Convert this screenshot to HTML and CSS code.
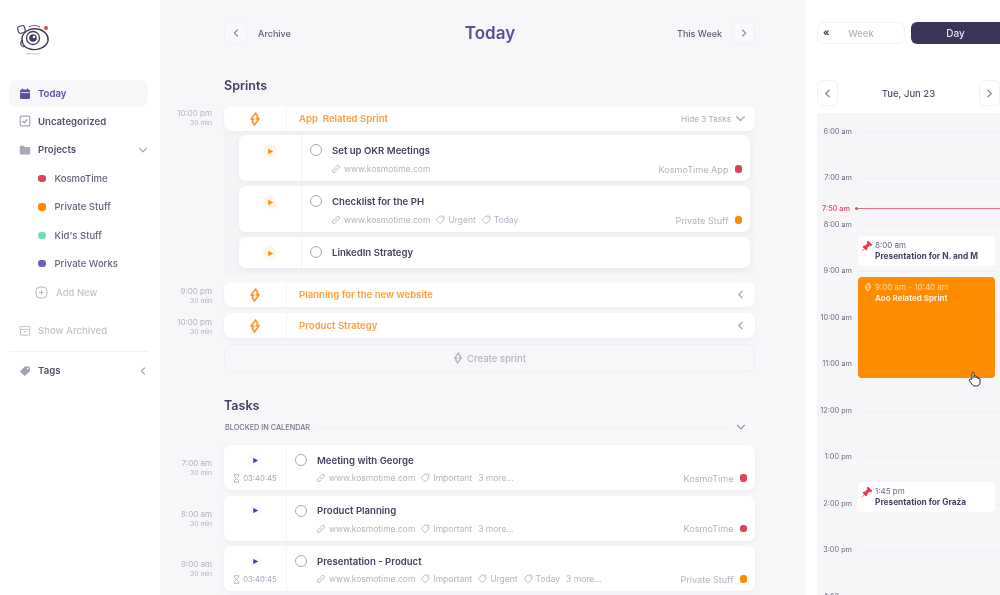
FILE: index.html
```html
<!DOCTYPE html>
<html lang="en">
<head>
    <meta charset="UTF-8">
    <meta name="viewport" content="width=device-width, initial-scale=1.0">
    <title>KosmoTime - Today</title>
    <link rel="stylesheet" href="styles.css">
</head>
<body>
    <svg class="icon-defs" aria-hidden="true">
        <symbol id="bolt" viewBox="0 0 12 14"><path d="M6.6 1 L2 7.2 L4.6 7.2 L3.2 9.2 L5.4 13 L10 6.8 L7.4 6.8 L8.8 4.8 Z" fill="none" stroke="currentColor" stroke-width="1.7" stroke-linejoin="round"/></symbol>
        <symbol id="link" viewBox="0 0 10 10"><path d="M4.2 5.8 L5.8 4.2 M3.4 4.4 L1.9 5.9 a1.5 1.5 0 0 0 2.2 2.2 L5.6 6.6 M4.4 3.4 L5.9 1.9 a1.5 1.5 0 0 1 2.2 2.2 L6.6 5.6" fill="none" stroke="currentColor" stroke-width="0.9" stroke-linecap="round"/></symbol>
        <symbol id="tag" viewBox="0 0 10 10"><path d="M1.2 4.6 L5 1 L8.8 1.2 L8.8 5 L5.2 8.8 Z" fill="none" stroke="currentColor" stroke-width="0.9" stroke-linejoin="round"/><circle cx="6.9" cy="3" r="0.6" fill="currentColor"/></symbol>
        <symbol id="play" viewBox="0 0 8 8"><path d="M1.4 .8 L7 4 L1.4 7.2 Z" fill="currentColor"/></symbol>
        <symbol id="left" viewBox="0 0 10 10"><path d="M6.4 2 L3.4 5 L6.4 8" fill="none" stroke="currentColor" stroke-width="1.2" stroke-linecap="round" stroke-linejoin="round"/></symbol>
        <symbol id="right" viewBox="0 0 10 10"><path d="M3.6 2 L6.6 5 L3.6 8" fill="none" stroke="currentColor" stroke-width="1.2" stroke-linecap="round" stroke-linejoin="round"/></symbol>
        <symbol id="down" viewBox="0 0 10 10"><path d="M1.6 3.4 L5 6.8 L8.4 3.4" fill="none" stroke="currentColor" stroke-width="1.2" stroke-linecap="round" stroke-linejoin="round"/></symbol>
        <symbol id="hourglass" viewBox="0 0 8 10"><path d="M1 .7 H7 M1 9.3 H7 M1.6 .7 V2.6 L6.4 7.4 V9.3 M6.4 .7 V2.6 L1.6 7.4 V9.3" fill="none" stroke="currentColor" stroke-width="0.9"/></symbol>
        <symbol id="pin" viewBox="0 0 10 10"><path d="M5.8 .8 L9.2 4.2 L8.2 4.8 L6.9 4.6 L5 6.4 L5 7.8 L4.2 8.4 L1.6 5.8 L2.2 5 L3.6 5 L5.4 3.1 L5.2 1.8 Z M2.8 7.2 L.8 9.2" fill="#e8344e" stroke="#e8344e" stroke-width="0.6" stroke-linejoin="round"/></symbol>
    </svg>

    <aside class="sidebar">
        <svg class="logo" width="36" height="40" viewBox="0 0 36 40">
            <rect x="2" y="8" width="7" height="7" rx="2" transform="rotate(-15 5.5 11.5)" fill="#fff" stroke="#4a4560" stroke-width="1.2"/>
            <path d="M6 21 C6 14 14 10 21 11 C29 12 33 18 32 23 C30 30 20 33 14 31 C9 30 6 26 6 21 Z" fill="#fff" stroke="#3f3a58" stroke-width="1.4"/>
            <circle cx="17" cy="20" r="6.5" fill="#fff" stroke="#3f3a58" stroke-width="1.3"/>
            <circle cx="17" cy="20" r="3.8" fill="#3f3a58"/>
            <circle cx="18" cy="19" r="1.3" fill="#fff"/>
            <path d="M13 9 C15 7 21 7 24 9" fill="none" stroke="#6a6680" stroke-width="1.2"/>
            <path d="M6 22 C4 25 4 28 8 29" fill="none" stroke="#3f3a58" stroke-width="1.2"/>
            <circle cx="30" cy="10" r="2" fill="#ee3f55"/>
            <rect x="10" y="35" width="14" height="1.5" rx="1" fill="#d5d5dc"/>
        </svg>

        <nav class="nav">
            <a class="nav-item active">
                <svg width="12" height="12" viewBox="0 0 12 12"><path d="M1 3 a1.5 1.5 0 0 1 1.5 -1.5 H9.5 A1.5 1.5 0 0 1 11 3 V9.5 A1.5 1.5 0 0 1 9.5 11 H2.5 A1.5 1.5 0 0 1 1 9.5 Z" fill="#5c4fa2"/><path d="M1.5 4.6 H10.5" stroke="#fff" stroke-width="0.8"/><path d="M3.5 .6 V2.4 M8.5 .6 V2.4" stroke="#5c4fa2" stroke-width="1.1"/></svg>
                Today
            </a>
            <a class="nav-item">
                <svg width="12" height="12" viewBox="0 0 12 12"><rect x="1.2" y="1.2" width="9.6" height="9.6" rx="1.4" fill="#fff" stroke="#a6a5b3" stroke-width="1.2"/><path d="M3.6 6 L5.3 7.7 L8.4 4.3" fill="none" stroke="#8d8c9c" stroke-width="1.1"/></svg>
                Uncategorized
            </a>
            <a class="nav-item">
                <svg width="12" height="12" viewBox="0 0 12 12"><path d="M.8 2.8 A1 1 0 0 1 1.8 1.8 H4.6 L5.8 3 H10.2 A1 1 0 0 1 11.2 4 V9.4 A1 1 0 0 1 10.2 10.4 H1.8 A1 1 0 0 1 .8 9.4 Z" fill="#a9a8b6"/></svg>
                Projects
                <svg class="nav-caret" width="10" height="10"><use href="#down"/></svg>
            </a>
            <a class="nav-item project"><span class="dot red"></span>KosmoTime</a>
            <a class="nav-item project"><span class="dot orange"></span>Private Stuff</a>
            <a class="nav-item project"><span class="dot mint"></span>Kid's Stuff</a>
            <a class="nav-item project"><span class="dot violet"></span>Private Works</a>
            <a class="nav-item project muted">
                <svg class="add-icon" width="13" height="13" viewBox="0 0 13 13"><rect x="1" y="1" width="11" height="11" rx="4" fill="none" stroke="#b9b8c4" stroke-width="1"/><path d="M6.5 4 V9 M4 6.5 H9" stroke="#b9b8c4" stroke-width="1"/></svg>
                Add New
            </a>
            <a class="nav-item muted archived">
                <svg width="12" height="12" viewBox="0 0 12 12"><rect x=".8" y="1.6" width="10.4" height="2.8" rx=".6" fill="none" stroke="#c2c1cc" stroke-width="1"/><path d="M1.6 4.4 V10.2 H10.4 V4.4 M4.6 6.6 H7.4" fill="none" stroke="#c2c1cc" stroke-width="1"/></svg>
                Show Archived
            </a>
            <a class="nav-item tags">
                <svg width="12" height="12" viewBox="0 0 12 12"><path d="M.8 6.4 L6 1.4 L10.6 1.6 L11 6 L5.8 11 Z" fill="#a09fae"/><circle cx="8.6" cy="3.6" r=".8" fill="#fff"/></svg>
                Tags
                <svg class="nav-caret" width="10" height="10"><use href="#left"/></svg>
            </a>
        </nav>
    </aside>

    <main class="main">
        <header class="top">
            <button class="square"><svg width="10" height="10"><use href="#left"/></svg></button>
            <span class="top-link archive">Archive</span>
            <h1>Today</h1>
            <span class="top-link week">This Week</span>
            <button class="square"><svg width="10" height="10"><use href="#right"/></svg></button>
        </header>

        <h2 class="sprints-title">Sprints</h2>

        <div class="line open">
            <div class="time">10:00 pm<small>30 min</small></div>
            <div class="sprint">
                <div class="sprint-icon"><svg width="12" height="14"><use href="#bolt"/></svg></div>
                <div class="sprint-name">App&nbsp; Related Sprint</div>
                <div class="sprint-toggle">Hide 3 Tasks <svg width="11" height="11"><use href="#down"/></svg></div>
            </div>
        </div>

        <div class="subtasks">
            <div class="subtask tall">
                <div class="subtask-play"><span class="play-glow"><svg width="7" height="7"><use href="#play"/></svg></span></div>
                <div class="body">
                    <div class="title"><span class="radio"></span>Set up OKR Meetings</div>
                    <div class="meta">
                        <svg width="10" height="10"><use href="#link"/></svg>www.kosmotime.com
                        <span class="project-name">KosmoTime App<span class="dot red"></span></span>
                    </div>
                </div>
            </div>
            <div class="subtask tall">
                <div class="subtask-play"><span class="play-glow"><svg width="7" height="7"><use href="#play"/></svg></span></div>
                <div class="body">
                    <div class="title"><span class="radio"></span>Checklist for the PH</div>
                    <div class="meta">
                        <svg width="10" height="10"><use href="#link"/></svg>www.kosmotime.com
                        <svg class="gap" width="10" height="10"><use href="#tag"/></svg>Urgent
                        <svg class="gap" width="10" height="10"><use href="#tag"/></svg>Today
                        <span class="project-name">Private Stuff<span class="dot orange"></span></span>
                    </div>
                </div>
            </div>
            <div class="subtask short">
                <div class="subtask-play"><span class="play-glow"><svg width="7" height="7"><use href="#play"/></svg></span></div>
                <div class="body">
                    <div class="title"><span class="radio"></span>LinkedIn Strategy</div>
                </div>
            </div>
        </div>

        <div class="line after-sub low">
            <div class="time">9:00 pm<small>30 min</small></div>
            <div class="sprint">
                <div class="sprint-icon"><svg width="12" height="14"><use href="#bolt"/></svg></div>
                <div class="sprint-name">Planning for the new website</div>
                <div class="sprint-toggle"><svg width="11" height="11"><use href="#left"/></svg></div>
            </div>
        </div>
        <div class="line low">
            <div class="time">10:00 pm<small>30 min</small></div>
            <div class="sprint">
                <div class="sprint-icon"><svg width="12" height="14"><use href="#bolt"/></svg></div>
                <div class="sprint-name">Product Strategy</div>
                <div class="sprint-toggle"><svg width="11" height="11"><use href="#left"/></svg></div>
            </div>
        </div>
        <div class="line">
            <div class="time"></div>
            <button class="create"><svg width="10" height="12"><use href="#bolt"/></svg>Create sprint</button>
        </div>

        <h2 class="tasks-title">Tasks</h2>
        <div class="blocked">
            <span>BLOCKED IN CALENDAR</span>
            <i></i>
            <svg width="10" height="10"><use href="#down"/></svg>
        </div>

        <div class="line task-line">
            <div class="time">7:00 am<small>30 min</small></div>
            <div class="task">
                <div class="task-side">
                    <span class="play-glow blue"><svg width="7" height="7"><use href="#play"/></svg></span>
                    <span class="timer"><svg width="7" height="9"><use href="#hourglass"/></svg>03:40:45</span>
                </div>
                <div class="body">
                    <div class="title"><span class="radio"></span>Meeting with George</div>
                    <div class="meta">
                        <svg width="10" height="10"><use href="#link"/></svg>www.kosmotime.com
                        <svg class="gap" width="10" height="10"><use href="#tag"/></svg>Important
                        <span class="more">3 more...</span>
                        <span class="project-name">KosmoTime<span class="dot red"></span></span>
                    </div>
                </div>
            </div>
        </div>
        <div class="line task-line">
            <div class="time">8:00 am<small>30 min</small></div>
            <div class="task">
                <div class="task-side">
                    <span class="play-glow blue"><svg width="7" height="7"><use href="#play"/></svg></span>
                    <span class="timer"></span>
                </div>
                <div class="body">
                    <div class="title"><span class="radio"></span>Product Planning</div>
                    <div class="meta">
                        <svg width="10" height="10"><use href="#link"/></svg>www.kosmotime.com
                        <svg class="gap" width="10" height="10"><use href="#tag"/></svg>Important
                        <span class="more">3 more...</span>
                        <span class="project-name">KosmoTime<span class="dot red"></span></span>
                    </div>
                </div>
            </div>
        </div>
        <div class="line task-line">
            <div class="time">9:00 am<small>30 min</small></div>
            <div class="task">
                <div class="task-side">
                    <span class="play-glow blue"><svg width="7" height="7"><use href="#play"/></svg></span>
                    <span class="timer"><svg width="7" height="9"><use href="#hourglass"/></svg>03:40:45</span>
                </div>
                <div class="body">
                    <div class="title"><span class="radio"></span>Presentation - Product</div>
                    <div class="meta">
                        <svg width="10" height="10"><use href="#link"/></svg>www.kosmotime.com
                        <svg class="gap" width="10" height="10"><use href="#tag"/></svg>Important
                        <svg class="gap" width="10" height="10"><use href="#tag"/></svg>Urgent
                        <svg class="gap" width="10" height="10"><use href="#tag"/></svg>Today
                        <span class="more">3 more...</span>
                        <span class="project-name">Private Stuff<span class="dot orange"></span></span>
                    </div>
                </div>
            </div>
        </div>
    </main>

    <aside class="day">
        <div class="switch">
            <div class="switch-week"><b>«</b><span>Week</span></div>
            <div class="switch-day">Day</div>
        </div>
        <div class="date-nav">
            <button class="square big"><svg width="11" height="11"><use href="#left"/></svg></button>
            <span>Tue, Jun 23</span>
            <button class="square big"><svg width="11" height="11"><use href="#right"/></svg></button>
        </div>
        <div class="calendar">
            <div class="hour"><span>6:00 am</span><i></i></div>
            <div class="hour"><span>7:00 am</span><i></i></div>
            <div class="hour"><span>8:00 am</span><i></i></div>
            <div class="hour"><span>9:00 am</span><i></i></div>
            <div class="hour"><span>10:00 am</span><i></i></div>
            <div class="hour"><span>11:00 am</span><i></i></div>
            <div class="hour"><span>12:00 pm</span><i></i></div>
            <div class="hour"><span>1:00 pm</span><i></i></div>
            <div class="hour"><span>2:00 pm</span><i></i></div>
            <div class="hour"><span>3:00 pm</span><i></i></div>
            <div class="hour"><span>4:00 pm</span><i></i></div>

            <div class="now"><span>7:50 am</span><i></i></div>

            <div class="event ev-one">
                <svg width="12" height="12"><use href="#pin"/></svg>
                <div><p>8:00 am</p><strong>Presentation for N. and M</strong></div>
            </div>
            <div class="event sprint-event">
                <svg width="8" height="10"><use href="#bolt"/></svg>
                <div><p>9:00 am - 10:40 am</p><strong>Aoo Related Sprint</strong></div>
            </div>
            <div class="event ev-three">
                <svg width="12" height="12"><use href="#pin"/></svg>
                <div><p>1:45 pm</p><strong>Presentation for Graża</strong></div>
            </div>
            <svg class="cursor" width="14" height="16" viewBox="0 0 14 16"><path d="M4 8 V2.2 a1 1 0 0 1 2 0 V6.5 V5.6 a1 1 0 0 1 2 0 V6.8 a1 1 0 0 1 2 0 V8 a1 1 0 0 1 2 0 V11 C12 13.6 10.6 15 8.4 15 H7 C5.4 15 4.6 14.2 3.8 13 L1.4 9.6 C.8 8.6 2 7.6 3 8.4 Z" fill="#fff" stroke="#2e2a3d" stroke-width="1"/></svg>
        </div>
    </aside>
</body>
</html>
```

FILE: styles.css
```css
* { box-sizing: border-box; }
html, body { height: 100%; }
html { background: #fff; }
body {
    margin: 0;
    display: flex;
    height: 595px;
    overflow: hidden;
    background: #fff;
    color: #45415f;
    font-family: Inter, "Noto Sans", "Liberation Sans", sans-serif;
    filter: blur(0.5px);
}
button { font-family: inherit; padding: 0; cursor: pointer; }
svg { display: block; flex: none; }
.icon-defs { position: absolute; width: 0; height: 0; }

/* sidebar */
.sidebar { width: 160px; flex: none; padding: 18px 12px 0 9px; background: #fff; }
.logo { margin: 0 0 22px 7px; }
.nav { display: flex; flex-direction: column; }
.nav-item {
    display: flex;
    align-items: center;
    gap: 7px;
    height: 28.4px;
    padding: 0 0 0 10px;
    font-size: 9.6px;
    font-weight: 600;
    color: #55516b;
    border-radius: 8px;
}
.nav-item.active { background: #f7f7fa; color: #5c4fa2; height: 27px; }
.nav-caret { margin-left: auto; margin-right: 0; color: #a3a2b0; }
.nav-item.project { padding-left: 29px; gap: 9px; font-size: 9.5px; font-weight: 500; color: #66637a; }
.nav-item.project:nth-child(4) { margin-top: 0.5px; }
.nav-item.muted { color: #c3c2cd; font-weight: 500; }
.add-icon { margin-left: -3px; margin-right: -1px; }
.archived { margin-top: 10.5px; }
.tags { margin-top: 5.5px; border-top: 1px solid #f1f1f4; border-radius: 0; height: 39px; padding-top: 0; }
.dot { display: inline-block; width: 7.5px; height: 7.5px; border-radius: 3px; flex: none; }
.red { background: #dd4258; }
.orange { background: #ff8c00; }
.mint { background: #6fdcbc; }
.violet { background: #6f5fbb; }

/* main column */
.main { width: 645px; flex: none; padding: 22px 50px 0 0; background: #f7f7fa; }
.top { display: flex; align-items: center; height: 22px; margin-left: 64px; }
.top h1 { flex: none; margin: 0; text-align: center; font-size: 17px; font-weight: 600; color: #5a4f9c; }
.top-link { flex: 1; font-size: 9px; font-weight: 500; color: #5f5c74; white-space: nowrap; }
.archive { margin-left: 11px; }
.week { margin-right: 10px; text-align: right; }
.square {
    display: flex;
    align-items: center;
    justify-content: center;
    width: 23px;
    height: 22px;
    border: 1px solid #f1f1f5;
    border-radius: 6px;
    background: #f9f9fb;
    color: #8d8b9e;
}
.sprints-title, .tasks-title { margin: 0 0 0 64px; font-size: 12.5px; line-height: 16px; font-weight: 600; color: #45415f; }
.sprints-title { margin-top: 34px; margin-bottom: 12px; }
.tasks-title { margin-top: 26px; }

.line { display: flex; margin-bottom: 6px; }
.line.open { margin-bottom: 0; }
.line.after-sub { margin-top: 7px; }
.time { width: 64px; flex: none; padding: 3px 12px 0 0; text-align: right; font-size: 8px; line-height: 9px; color: #b3b2bf; }
.time small { display: block; font-size: 6.8px; }
.low .time { padding-top: 5px; }

.sprint {
    flex: 1;
    display: flex;
    align-items: center;
    height: 25px;
    background: #fff;
    border-radius: 8px;
    box-shadow: 0 2px 5px rgba(60, 55, 100, 0.04);
}
.sprint-icon { display: flex; justify-content: center; align-items: center; width: 63px; height: 100%; border-right: 1px solid #f3f3f6; color: #ff9a2e; }
.sprint-name { padding-left: 12px; font-size: 9.6px; font-weight: 600; color: #ff9e3a; }
.sprint-toggle { display: flex; align-items: center; gap: 4px; margin-left: auto; padding-right: 9px; font-size: 8.2px; color: #a9a8b6; }

.subtasks { display: flex; flex-direction: column; gap: 5px; margin-left: 64px; padding: 4px 5px 7px 15px; background: #f4f4f7; }
.subtask, .task { display: flex; background: #fff; border-radius: 7px; box-shadow: 0 2px 5px rgba(60, 55, 100, 0.05); }
.subtask.tall { height: 46px; }
.subtask.short { height: 31px; }
.subtask-play { display: flex; justify-content: center; width: 63px; flex: none; padding-top: 9px; border-right: 1px solid #f3f3f6; }
.play-glow { display: flex; align-items: center; justify-content: center; width: 14px; height: 14px; border-radius: 50%; background: #fff6ea; color: #ff8c00; }
.play-glow.blue { background: #fbfbfe; color: #4f3fa3; }

.body { flex: 1; min-width: 0; padding: 8px 8px 0 8px; }
.title { display: flex; align-items: center; gap: 10px; height: 14px; font-size: 9.6px; font-weight: 600; color: #45415f; }
.radio { width: 12px; height: 12px; border: 1.2px solid #a9a8b6; border-radius: 50%; flex: none; }
.meta { display: flex; align-items: center; height: 12px; margin: 6px 0 0 21px; font-size: 8.5px; color: #b4b3c0; white-space: nowrap; }
.task .meta { margin-top: 5px; }
.meta svg { margin-right: 3px; }
.meta svg.gap { margin-left: 5px; }
.more { margin-left: 6px; }
.project-name { display: flex; align-items: center; gap: 6px; margin-left: auto; font-size: 9.1px; }

.create {
    flex: 1;
    display: flex;
    align-items: center;
    justify-content: center;
    gap: 4px;
    height: 28px;
    border: 1px solid #f0f0f4;
    border-radius: 8px;
    background: #f7f7fa;
    font-size: 9.5px;
    font-weight: 500;
    color: #b5b4c0;
}

.blocked { display: flex; align-items: center; gap: 8px; height: 12px; margin: 7px 9px 12px 65px; font-size: 7.3px; font-weight: 500; color: #78758c; }
.blocked i { flex: 1; height: 1px; background: #f0f0f4; }
.blocked svg { color: #8d8b9e; }

.task-line { margin-bottom: 5.5px; }
.task-line .time { padding-top: 14px; }
.task { flex: 1; height: 45px; }
.task-side { display: flex; flex-direction: column; align-items: center; justify-content: flex-start; width: 63px; flex: none; padding-top: 8px; border-right: 1px solid #f3f3f6; }
.timer { display: flex; align-items: center; gap: 3px; height: 10px; margin-top: 6px; font-size: 7.7px; color: #a9a8b6; }

/* day panel */
.day { width: 195px; flex: none; padding: 22px 0 0 12px; background: #fff; }
.switch { display: flex; gap: 6px; height: 22px; }
.switch-week { position: relative; width: 88px; display: flex; align-items: center; justify-content: center; border: 1px solid #f1f1f5; border-radius: 7px; font-size: 9.5px; font-weight: 500; color: #b3b2bf; }
.switch-week b { position: absolute; left: 5px; top: 3px; font-size: 10px; color: #45415f; }
.switch-day { flex: 1; display: flex; align-items: center; justify-content: center; background: #3b3358; border-radius: 6px 0 0 6px; font-size: 10px; font-weight: 500; color: #e2e1ea; }
.date-nav { display: flex; align-items: center; justify-content: space-between; margin-top: 36px; height: 26px; font-size: 9.5px; font-weight: 500; color: #55516b; }
.square.big { width: 21px; height: 26px; background: #fff; }
.calendar { position: relative; height: 482px; margin-top: 7px; padding-top: 13.5px; background: #f6f6f8; overflow: hidden; }
.hour { display: flex; height: 46.5px; font-size: 7.3px; line-height: 10px; color: #6b6880; }
.hour span { width: 35px; flex: none; text-align: right; white-space: nowrap; }
.hour i { flex: 1; height: 1px; margin: 5px 0 0 8px; background: #eeeef2; }
.now { position: absolute; top: 90px; left: 0; right: 0; display: flex; align-items: center; height: 10px; font-size: 7.3px; font-weight: 500; color: #e8465e; }
.now span { width: 33px; text-align: right; white-space: nowrap; }
.now i { position: relative; flex: 1; height: 1px; margin-left: 6px; background: #ec6b80; }
.now i::before { content: ""; position: absolute; left: -1px; top: -1px; width: 3px; height: 3px; border-radius: 50%; background: #e8465e; }

.event { position: absolute; left: 41px; width: 137px; display: flex; gap: 2px; padding: 4px 3px; background: #fff; border-radius: 4px; }
.event p { margin: 0; font-size: 8px; line-height: 10.5px; color: #6b6880; }
.event strong { display: block; font-size: 8.3px; line-height: 10.5px; font-weight: 700; color: #45415f; white-space: nowrap; }
.ev-one { top: 123px; height: 30px; }
.ev-three { top: 369px; height: 30px; }
.sprint-event { top: 164px; height: 101px; padding: 5px 3px 5px 6px; gap: 3px; background: #ff8c00; color: #ffd9a8; }
.sprint-event p { color: #ffd9a8; }
.sprint-event strong { font-size: 8px; color: #ffeeda; }
.cursor { position: absolute; left: 151px; top: 258px; }
```
